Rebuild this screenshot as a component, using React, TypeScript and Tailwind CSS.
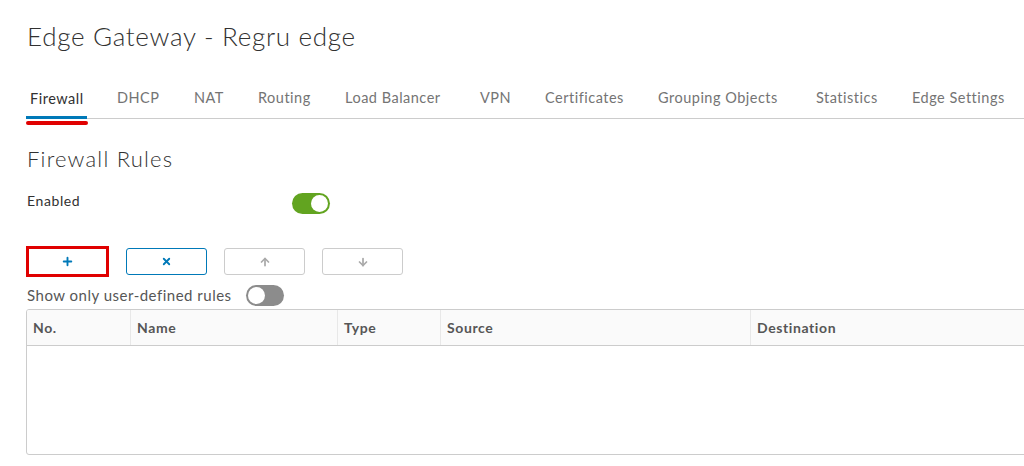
import { Plus, X, ArrowUp, ArrowDown } from "lucide-react";

const tabs = [
    { label: "Firewall", width: "w-[87px]" },
    { label: "DHCP", width: "w-[77px]" },
    { label: "NAT", width: "w-[64px]" },
    { label: "Routing", width: "w-[87px]" },
    { label: "Load Balancer", width: "w-[135px]" },
    { label: "VPN", width: "w-[65px]" },
    { label: "Certificates", width: "w-[113px]" },
    { label: "Grouping Objects", width: "w-[158px]" },
    { label: "Statistics", width: "w-[96px]" },
    { label: "Edge Settings", width: "w-[110px]" },
]

const columns = [
    { label: "No.", width: "w-[103px]" },
    { label: "Name", width: "w-[207px]" },
    { label: "Type", width: "w-[103px]" },
    { label: "Source", width: "w-[310px]" },
    { label: "Destination", width: "w-[380px]" },
]

function Toggle({ on }: { on: boolean }) {
    return (
        <div className={`w-[38px] h-[21px] rounded-full p-[2px] flex ${on ? "bg-[#62a420] justify-end" : "bg-[#8c8c8c] justify-start"}`}>
            <div className="w-[17px] h-[17px] rounded-full bg-white" />
        </div>
    )
}

export default function App() {
    return (
        <div className="w-[1024px] h-[466px] overflow-hidden bg-white text-[#565656]" style={{ fontFamily: "Lato, 'Open Sans', sans-serif" }}>
            <div className="pl-[26px]">
                <h1 className="pt-[20px] text-[26px] font-light tracking-[0.7px] text-[#313131] leading-[32px] pl-[1px]">Edge Gateway - Regru edge</h1>

                <div className="mt-[29px] flex border-b border-[#cccccc] h-[38px]">
                    {tabs.map((tab, i) => (
                        <div key={tab.label} className={`${tab.width} shrink-0`}>
                            <div
                                className={`relative inline-block px-[4px] text-[14.5px] tracking-[0.5px] leading-[34px] ${i == 0 ? "w-[61px] mt-[1px] text-[#313131] border-b-[3px] border-[#0079b8]" : "text-[#747474]"}`}>
                                {tab.label}
                                {i == 0 ? (
                                    <div className="absolute left-0 right-[-1px] top-[39px] h-[4px] rounded-full bg-[#e00000]" />
                                ) : ""}
                            </div>
                        </div>
                    ))}
                </div>

                <h2 className="mt-[26px] text-[22px] font-light tracking-[1.2px] text-[#313131] leading-[28px] pl-[1px]">Firewall Rules</h2>

                <div className="mt-[20px] flex items-center h-[21px]">
                    <span className="w-[266px] text-[14px] tracking-[0.6px] text-[#313131] pl-[1px] -mt-[7px]">Enabled</span>
                    <Toggle on={true} />
                </div>

                <div className="mt-[32px] flex gap-[17px] items-center">
                    <div className="w-[83px] h-[31px] border-[3px] border-[#e00000] flex items-center justify-center">
                        <Plus size={13} strokeWidth={3.5} className="text-[#0079b8]" />
                    </div>
                    <button className="w-[81px] h-[27px] border border-[#0079b8] rounded-[3px] flex items-center justify-center">
                        <X size={11} strokeWidth={4} className="text-[#0079b8]" />
                    </button>
                    <button className="w-[81px] h-[27px] border border-[#cccccc] rounded-[3px] flex items-center justify-center">
                        <ArrowUp size={12} strokeWidth={3.5} className="text-[#aaaaaa]" />
                    </button>
                    <button className="w-[81px] h-[27px] border border-[#cccccc] rounded-[3px] flex items-center justify-center">
                        <ArrowDown size={12} strokeWidth={3.5} className="text-[#aaaaaa]" />
                    </button>
                </div>

                <div className="mt-[8px] flex items-center h-[21px]">
                    <span className="text-[15px] tracking-[0.5px] pl-[1px] mr-[14px]">Show only user-defined rules</span>
                    <Toggle on={false} />
                </div>

                <div className="mt-[3px] w-[1120px] h-[146px] border border-[#cccccc] rounded-[3px] overflow-hidden">
                    <div className="flex h-[36px] bg-[#fafafa] border-b border-[#cccccc]">
                        {columns.map((col, i) => (
                            <div
                                key={col.label}
                                className={`${col.width} ${i > 0 ? "border-l border-[#e8e8e8]" : ""} px-[6px] text-[14px] font-bold tracking-[0.6px] leading-[35px] text-[#565656]`}>
                                {col.label}
                            </div>
                        ))}
                    </div>
                </div>
            </div>
        </div>
    );
}
